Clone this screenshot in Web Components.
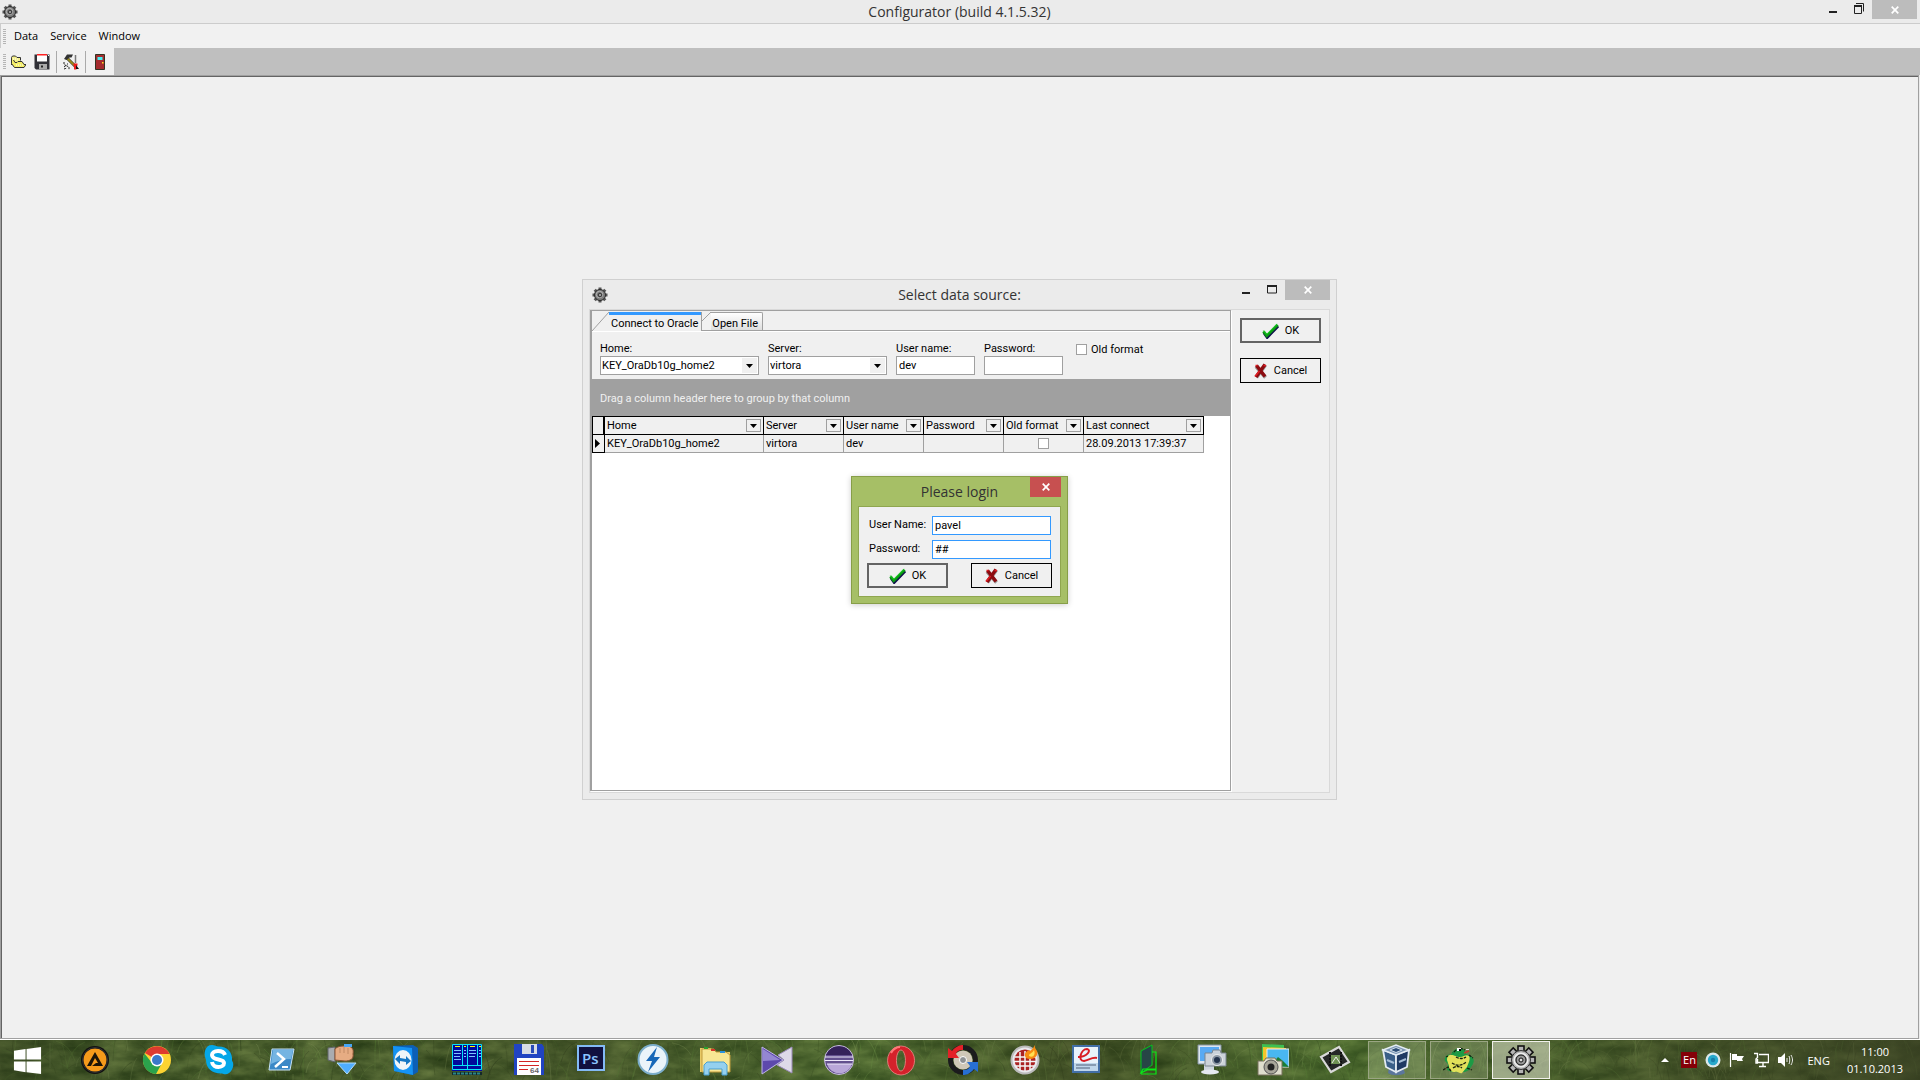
<!DOCTYPE html>
<html lang="en">
<head>
<meta charset="utf-8">
<title>Configurator (build 4.1.5.32)</title>
<style>
html, body { margin: 0; height: 100%; overflow: hidden; background: #f0f0f0; }
body { font: 11px/13px Roboto, "Liberation Sans", Arial, sans-serif; color: #000; --ui: "Open Sans", "Noto Sans", sans-serif; }
</style>
</head>
<body>
<config-desktop></config-desktop>
<script>
const define = (name, html) => customElements.define(name, class extends HTMLElement {
  connectedCallback() {
    if (this.shadowRoot) return;
    const root = this.attachShadow({ mode: 'open' });
    const t = document.createElement('template');
    t.innerHTML = typeof html === 'function' ? html(this) : html;
    root.append(t.content.cloneNode(true));
  }
});

let teeth = '';
for (let i = 0; i < 8; i++) teeth += `<rect x="13" y="2" width="6" height="7" fill="#b5b5b5" stroke="#111" stroke-width="1.6" transform="rotate(${i * 45} 16 16)"/>`;
let small = '';
for (let i = 0; i < 8; i++) small += `<rect x="6.500" y=".5" width="3" height="4" fill="#555" transform="rotate(${i * 45} 8 8)"/>`;

const icons = {
  gear: ['0 0 16 16', `${small}<circle cx="8" cy="8" r="5.500" fill="#7d7d7d" stroke="#2a2a2a"/><circle cx="7.500" cy="7.500" r="3.200" fill="none" stroke="#b5b5b5"/><circle cx="8" cy="8" r="1.800" fill="#999" stroke="#333"/>`],
  gearBig: ['0 0 32 32', `${teeth}<circle cx="16" cy="16" r="9.5" fill="#b5b5b5" stroke="#333" stroke-width="1"/><circle cx="16" cy="16" r="6.8" fill="none" stroke="#eee" stroke-width="1.5"/><circle cx="16" cy="16" r="5" fill="#999" stroke="#111" stroke-width="1"/><circle cx="16" cy="16" r="2" fill="#ddd" stroke="#111"/>`],
  open: ['0 0 16 16', '<path d="M1.500 11V3.500l1-1.500h3l1.500 1.500h3.500v3" fill="#f5f08a" stroke="#333"/><path d="M1.500 4.500v5l3 4h9.500l2-3h-2l-2-3H8L7 8.500H5L3.500 6" fill="#f4ee68" stroke="#333"/><path d="M3 5h6M6 11h7" stroke="#fff" stroke-dasharray="1 1"/>'],
  save: ['0 0 16 16', '<path d="M.5.500h15v15H2l-1.500-1.500z" fill="#303036"/><path d="M3 1h10v6.500H3z" fill="#fff"/><path d="M3 0h10v1.500H3z" fill="#f22"/><path d="M5 10h8v5H5z" fill="#aaa"/><path d="M7 11.500h2v2H7z" fill="#222"/><path d="M14 1h1v1h-1z" fill="#fff"/>'],
  tools: ['0 0 16 16', '<path d="M4 4l9 9" stroke="#333" stroke-width="3"/><path d="M4 4l9 9" stroke="#9a8c1c" stroke-width="2"/><path d="M1 5L4 .5h6L8.500 3.500 6.500 3.500 3.500 6z" fill="#333"/><path d="M12.500 1v8" stroke="#777" stroke-width="1.500"/><path d="M10.500 9.500h4v2l-1 .5v3.500h-2.500V12l-.5-.500z" fill="#ef1c1c"/><path d="M13 11l3 4h-3z" fill="#111"/><path d="M1 8v2.500l2 1 2-2M1 13l2-1.500 3 1.500v2.500M1 15l3-1" fill="none" stroke="#222" stroke-dasharray="2 1"/>'],
  door: ['0 0 16 16', '<path d="M3.500.500h9v15h-9z" fill="#a52c2e" stroke="#332"/><path d="M5.500 3h5v3h-5z" fill="#46f0f5"/><path d="M10 8h1.500v1.500H10z" fill="#ffe020"/>'],
  check: ['0 0 18 16', '<path d="M1.500 9l3.500 5L16.500 2" fill="none" stroke="#10104c" stroke-width="3" transform="translate(.5 .8)"/><path d="M1.500 8.500l3.500 4.500L16.500 1.500" fill="none" stroke="#0a9b12" stroke-width="3"/><path d="M1.500 7.500L5 11.500 16 .8" fill="none" stroke="#1fd52b" stroke-width="1"/>'],
  cross: ['0 0 14 16', '<path d="M2.500 14.500L11.500 2M2 3.500l9.500 11" fill="none" stroke="#999" stroke-width="3.500"/><path d="M2 14L11 1.500M2.500 2.500l8.500 11" fill="none" stroke="#8c0b10" stroke-width="3.500"/><path d="M1 13.500L5.500 8M9.500 2.500h2.500M1.500 2.500h2" stroke="#e01c22" stroke-width="1.500" fill="none"/>'],
  down: ['0 0 7 4', '<path d="M0 0h7L3.500 4z"/>'],
  pointer: ['0 0 5 9', '<path d="M0 0v9l5-4.500z"/>'],
  min: ['0 0 10 11', '<path d="M1 8h8v2H1z" fill="#222"/>'],
  max: ['0 0 10 11', '<path d="M.5 2h9v7h-9z" fill="none" stroke="#222"/><path d="M0 1h10v2H0z" fill="#222"/>'],
  restore: ['0 0 10 11', '<path d="M.5 3.500h7v7h-7z" fill="none" stroke="#222"/><path d="M0 2h8v2H0z" fill="#222"/><path d="M2 .5h7.500v8" fill="none" stroke="#222"/>'],
  close: ['0 0 8 8', '<path d="M.7.700l6.600 6.600M7.300.700L.7 7.300" stroke="#fff" stroke-width="1.700"/>'],
  start: ['0 0 32 32', '<path d="M2 6l12-2v11H2zM15 4l15-2v13H15zM2 17h12v11L2 26zM15 17h15v13l-15-2z" fill="#fff"/>'],
  aimp: ['0 0 32 32', '<circle cx="16" cy="16" r="14" fill="#111"/><circle cx="16" cy="16" r="11.5" fill="#f59a1b"/><circle cx="16" cy="16" r="12.500" fill="none" stroke="#333"/><path d="M16 8l8 14-11 0 4-3h2l-3-5-4 8H8z" fill="#1c1408"/>'],
  chrome: ['0 0 32 32', '<circle cx="16" cy="16" r="14" fill="#fdd332"/><path d="M16 16L3.900 9A14 14 0 0 1 28.500 10H16z" fill="#dd3a2f"/><path d="M3.500 9.500A14 14 0 0 0 15 30l6-11-5-3-5 3z" fill="#2ba24c"/><circle cx="16" cy="16" r="6.500" fill="#fff"/><circle cx="16" cy="16" r="5" fill="#3a79c9"/>'],
  skype: ['0 0 32 32', '<path d="M9 1c3 0 5 2 7 1.500 8 0 14 6 13 14 2 3 1.500 6 0 9-2 4-6 6-10 4C10 30 3 25 3 16 0 9 2 1 9 1z" fill="#05a7e8"/><path d="M22 11c-1-3-4-4-7-4-4 0-6 2-6 4 0 6 12 3 12 8 0 5-11 6-12-1" fill="none" stroke="#fff" stroke-width="4"/>'],
  shell: ['0 0 32 32', '<path d="M7 5h22l-4 21H4z" fill="#3b88c7" stroke="#c7e2f5"/><path d="M8 6h20l-2 9C18 15 12 17 6 20z" fill="#74b4e2"/><path d="M12 9l7 6-9 8" fill="none" stroke="#fff" stroke-width="2.500"/><path d="M17 23h6" stroke="#fff" stroke-width="2"/>'],
  hand: ['0 0 32 32', '<path d="M1 4l7-1v15l-7-2z" fill="#a9acb0" stroke="#60656b"/><path d="M8 5c3-3 7-3 11-3 6 0 8 3 7 8 1 5-3 7-8 7L8 16z" fill="#e6ac83" stroke="#8b5434"/><path d="M13 4v5M17 3v6M21 4v6" stroke="#c08a64"/><path d="M10 19h19l-9 11z" fill="#4fadff" stroke="#b5dcf8"/><path d="M17 0h8v3h-8z" fill="#46a6f4"/>'],
  team: ['0 0 32 32', '<path d="M4 2l20-1 5 3v24l-5 3L5 27z" fill="#0c5fb6"/><path d="M4 2l19 2 1 27L5 27z" fill="#1593f3"/><ellipse cx="14" cy="16" rx="8.500" ry="10" fill="#f0f4f8"/><path d="M6 15l5-4v3l6 1v-3l5 5-5 4v-3l-6-1v3z" fill="#1576c4"/>'],
  far: ['0 0 32 32', '<path d="M1 0h30v27H1z" fill="#000a9c"/><path d="M1 28h30v3H1z" fill="#142a2a"/><path d="M1.500.5h29v25h-29zM16.500 0v26M11.500 1v20M26.500 1v20M2 21.500h28" fill="none" stroke="#0ae3f5"/><path d="M3 6.500h7M3 9.500h7M3 12.500h6M3 15.500h7M18 6.500h7M18 9.500h7M18 12.500h6M13 6.500h2M13 9.500h2M13 12.500h2M28 6.500h2M28 9.500h2M28 12.500h2" stroke="#7fc4ff"/><path d="M4 2.500h5M19 2.500h5M13 2.500h2M28 2.500h2" stroke="#ff0"/><path d="M2 29.500h28" stroke="#2b8586" stroke-width="2" stroke-dasharray="3 1"/>'],
  floppy: ['0 0 32 32', '<path d="M1 0h28l2 3v28H1z" fill="#2144c2"/><path d="M9 0h15v10H9z" fill="#d8dce4"/><path d="M18 1h3v8h-3z" fill="#294bb8"/><path d="M4 14h24v17H4z" fill="#fff"/><path d="M6 17.500h20M6 21.500h20M6 25.500h9" stroke="#d32525"/><text x="17" y="29" font-family="Liberation Sans" font-size="8" font-weight="bold" fill="#666">64</text>'],
  ps: ['0 0 32 32', '<path d="M3 2h26v24H3z" fill="#10103f" stroke="#83baf5" stroke-width="2"/><text x="7" y="20" font-family="Open Sans" font-size="15" font-weight="600" fill="#8bc5ff">Ps</text>'],
  daemon: ['0 0 32 32', '<circle cx="16" cy="15.500" r="14.500" fill="#eaf4fa" stroke="#7caecb" stroke-width="2"/><path d="M20 3L9 17l6 0-4 11 12-15h-6z" fill="#1768b8"/>'],
  explorer: ['0 0 32 32', '<path d="M1 4h11l2 4h17v20H1z" fill="#e8ca66"/><path d="M3 5h12l2 3h10l4 3v17H3z" fill="#f8e694" stroke="#c09b3c"/><path d="M5 3h4v2H5z" fill="#29a02d"/><path d="M12 5h4v2h-4z" fill="#d8342a"/><path d="M21 7h5v2h-5z" fill="#2a92df"/><path d="M5 31V21l3-3h17l3 3v10h-5v-6H10v6z" fill="#94d0ef" stroke="#4a9fcf"/>'],
  kmp: ['0 0 32 32', '<path d="M31 3L17 11l6 5-7 5 15 8z" fill="#ddd9e8" stroke="#9b8bbb"/><path d="M1 3l21 13L1 30z" fill="#5d49ac" stroke="#beb4e6"/><path d="M2 5l17 11L2 17z" fill="#9487d2"/>'],
  eclipse: ['0 0 32 32', '<circle cx="16" cy="16" r="14.500" fill="#63508e" stroke="#cabfe0"/><path d="M3 11A14 14 0 0 1 29 11z" fill="#35225a"/><path d="M4 20h25A13 13 0 0 1 4 20z" fill="#b9a7d9"/><path d="M2 13h28M2 16.500h28M4 20h25" stroke="#eee8fa" stroke-width="1.200"/>'],
  opera: ['0 0 32 32', '<path fill-rule="evenodd" d="M16 2a13.500 14.500 0 1 0 .1 0zM16 6a4.500 10.500 0 1 1-.1 0z" fill="#d5222b" stroke="#f08a8a" stroke-width=".8"/><path d="M6 9C9 4 13 3 15 3" fill="none" stroke="#f77" stroke-width="2"/>'],
  disc: ['0 0 32 32', '<circle cx="16" cy="16" r="12.500" fill="none" stroke="#1b1b1d" stroke-width="5"/><circle cx="16" cy="16" r="9.500" fill="#cfc8b8"/><circle cx="16" cy="16" r="3.500" fill="#8e9294" stroke="#fff"/><path d="M1 14V4l4 3C9 2 13 1 16 1v5c-4 0-6 1-7 4l3 4z" fill="#e32128"/><path d="M31 18v10l-4-3c-4 5-8 6-11 6v-5c4 0 6-1 7-4l-3-4z" fill="#276fd3"/>'],
  burner: ['0 0 32 32', '<circle cx="16" cy="16" r="13.500" fill="#e9e9ee" stroke="#bbb" stroke-width="2"/><circle cx="16" cy="16" r="10.500" fill="#a22"/><path d="M6 13h20M5 17.500h22M7 22h18M11 8v18M16 7v20M21 8v18" stroke="#f4f4f4" stroke-width="1.500"/><path d="M17 14c-3-5 1-6 2-8 2 2 4 0 7-5-1 5 4 5 2 10-2 4-7 5-11 3z" fill="#f68b12"/><path d="M20 12c0-3 3-2 5-6 2 5-1 8-5 6z" fill="#ffe053"/>'],
  sign: ['0 0 32 32', '<path d="M2 2h26v26H2z" fill="#e9f3fb" stroke="#426fa7" stroke-width="2"/><path d="M3 19h24v8H3z" fill="#bfd6ea"/><path d="M7 13C16 13 21 6 16 5 10 5 6 17 13 17c5-1 8-4 13-3" fill="none" stroke="#d81d24" stroke-width="2"/><path d="M5 21h20M5 24h14" stroke="#7688a0" stroke-width="1.500"/>'],
  book: ['0 0 32 32', '<path d="M8 7l11-6v20L8 29z" fill="#274646" stroke="#00c61c"/><path d="M19 8h4v18H14L8 29l2-4h13v5H8" fill="none" stroke="#0bea17" stroke-width="1.200"/>'],
  monitor: ['0 0 32 32', '<path d="M3 1h23v19H3z" fill="#dce6ef" stroke="#8694a2"/><path d="M5 3h19v14H5z" fill="#58aaf3"/><path d="M9 20h10v8H9z" fill="#cdd5de"/><ellipse cx="15" cy="28" rx="9" ry="2.500" fill="#e5e9ef"/><path d="M10 9h7l1-3h7l1 3h5v13H10z" fill="#cbd2da" stroke="#7b858f"/><circle cx="22" cy="16" r="5.500" fill="#8c97a4" stroke="#eee"/><circle cx="22" cy="16" r="3" fill="#23324b"/>'],
  photos: ['0 0 32 32', '<path d="M5 0l22 1v17H5z" fill="#3dbf52"/><path d="M6 3l23 1v17H6z" fill="#f2c628"/><path d="M10 5h22v18H10z" fill="#49b7f1" stroke="#eee"/><path d="M13 22l8-9 5 4 6 6z" fill="#1b7d35"/><path d="M1 17h6l2-3h9l2 3h5v14H1z" fill="#dfdecd" stroke="#77715c"/><circle cx="14" cy="23" r="7" fill="#a8a69a" stroke="#555"/><circle cx="14" cy="23" r="3.500" fill="#222"/>'],
  film: ['0 0 32 32', '<path d="M2 13L20 3l10 15-18 10z" fill="#252727" stroke="#d9d9d9" stroke-width="2.200"/><path d="M12 11h9v9h-9z" fill="#6f9154"/><path d="M11 8v15M22 8v15" stroke="#111" stroke-width="2" stroke-dasharray="2 1"/><path d="M13 19l4-6 4 6" stroke="#eee" fill="none"/>'],
  vbox: ['0 0 32 32', '<path d="M8 24h14l2 5c-4 3-13 3-17 0z" fill="#5b769c"/><path d="M2 6l13 5v17L5 23z" fill="#3a5f88" stroke="#e3ebf2" stroke-width="1.800"/><path d="M15 11l13-5-2 17-11 5z" fill="#1f3a63" stroke="#e3ebf2" stroke-width="1.800"/><path d="M2 6l13-5 13 5-13 5z" fill="#7d98b5" stroke="#e4edf4" stroke-width="1.500"/><path d="M9 6l6-2.500L21 6l-6 2.500z" fill="#2d4f78" stroke="#cfdbe6"/><path d="M6 16l7 3M18 18l7-3" stroke="#a5bdd6" stroke-width="2"/>'],
  toad: ['0 0 32 32', '<path d="M8 11C4 10 1 13 2 17l3 3-1 6 5 2h13l4-2 4-6c2-4 0-8-4-9l-3-1c-1-5-5-7-8-5-4 0-6 3-7 6z" fill="#1d9a45"/><path d="M8 11c4 0 5 2 9 2 4 0 6-3 9-1 2 3-1 8-2 11l-5 6c-2 1-4-2-7-1-4 0-6-2-6-6l-2-6c0-3 1-5 4-5z" fill="#e2e05a"/><path d="M9 19c4 3 10 3 14-1M10 24c3-2 6-2 9 0M13 13c3 2 7 2 10 0M0 26l5-3 3 4M24 24l5 2M3 13l2-1M26 11l4 3M13 6l-3 3M17 4l5 2" fill="none" stroke="#161f10" stroke-width="1.300" stroke-dasharray="3 1"/><path d="M14 4h4v3h-4z" fill="#fff"/><path d="M16 5h2v2h-2z"/><path d="M21 9l5-2" stroke="#c63b2a" stroke-width="1.500"/><path d="M23 5h3v1h-3z" fill="#ddd"/>'],
  up: ['0 0 16 16', '<path d="M4 10h8L8 6z" fill="#fff"/>'],
  teal: ['0 0 16 16', '<circle cx="8" cy="8" r="7.500" fill="#dce9eb"/><circle cx="8" cy="8" r="5.200" fill="#28a9cc"/><circle cx="8" cy="8" r="2.200" fill="#1681ac"/>'],
  flag: ['0 0 16 16', '<path d="M1.500 1v14" stroke="#fff" stroke-width="1.200"/><path d="M3 2h5v2h7l-2 3 1 2H8V8H3z" fill="#fff"/>'],
  network: ['0 0 16 16', '<path d="M6 2.500h9.500v8H4.500V7M10 11v3M6 14.500h7M1 1.500h3.500v4L3 7v4h2" fill="none" stroke="#fff" stroke-width="1.400"/>'],
  speaker: ['0 0 16 16', '<path d="M1 5h3l4-4v14l-4-4H1z" fill="#fff"/><path d="M10 6v4M12 4c1 2 1 6 0 8M14 3c2 4 2 6 0 10" fill="none" stroke="#eee"/>']
};

define('ui-icon', el => {
  const [box, body] = icons[el.getAttribute('name')];
  const w = el.getAttribute('w') || 16, h = el.getAttribute('h') || w;
  return `<style>:host{display:block;flex:none;line-height:0}svg{display:block}</style><svg width="${w}" height="${h}" viewBox="${box}" aria-hidden="true">${body}</svg>`;
});

define('window-controls', el => `<style>
:host{display:flex;align-items:stretch;height:var(--h,20px)}
button{border:0;margin:0;padding:0;background:none;width:26px;display:flex;align-items:flex-end;justify-content:center;padding-bottom:5px}
.close{width:45px;background:#bcbcbc;align-items:center;padding:0}
:host([tone=red]) .close{width:31px;background:#c75050}
</style>
${el.getAttribute('tone') === 'red' ? '' : `<button aria-label="Minimize"><ui-icon name="min" w="10" h="11"></ui-icon></button><button aria-label="Resize"><ui-icon name="${el.getAttribute('mid')}" w="10" h="11"></ui-icon></button>`}
<button class="close" aria-label="Close"><ui-icon name="close" w="8"></ui-icon></button>`);

define('title-bar', `<style>
:host{display:grid;grid-template-columns:1fr auto 1fr;height:var(--bar,23px)}
h1{grid-column:2;margin:0;align-self:center;font:400 14px/20px var(--ui);color:#333;white-space:nowrap}
.icon{align-self:center;padding-left:var(--inset,0)}.end{grid-column:3;display:flex;justify-content:flex-end;align-items:flex-start}
</style><span class="icon"><slot name="icon"></slot></span><h1><slot></slot></h1><div class="end"><slot name="controls"></slot></div>`);

define('menu-bar', `<style>
:host{display:flex;align-items:center;height:24px;background:#f1f1f1;border-left:1px solid #ccc;padding-left:2px}
i{width:3px;height:15px;background:repeating-linear-gradient(#b5b5b5 0 1px,transparent 1px 2px);margin-right:2px}
button{border:0;background:none;font:11px/16px var(--ui);color:#000;padding:0 6px}
</style><i></i><button>Data</button><button>Service</button><button>Window</button>`);

define('tool-bar', `<style>
:host{display:flex;height:27px;background:#bfbfbf}
div{display:flex;align-items:center;background:#f1f1f1;padding:0 2px 0 3px;box-sizing:border-box}
i{width:3px;height:15px;background:repeating-linear-gradient(#b5b5b5 0 1px,transparent 1px 2px)}
button{border:0;background:none;padding:4px;width:24px}
b{width:1px;height:22px;background:#aaa;margin:0 2px}
</style><div><i></i><button aria-label="Open"><ui-icon name="open"></ui-icon></button><button aria-label="Save"><ui-icon name="save"></ui-icon></button><b></b><button aria-label="Tools"><ui-icon name="tools"></ui-icon></button><b></b><button aria-label="Exit"><ui-icon name="door"></ui-icon></button></div>`);

define('action-button', el => `<style>
:host{display:block;width:81px}
button{box-sizing:border-box;width:100%;height:25px;border:1px solid #000;background:#f0f0f0;padding:0;display:flex;align-items:center;justify-content:center;gap:6px;font:inherit;color:#000}
:host([primary]) button{border:2px solid #646464}
</style><button><ui-icon name="${el.getAttribute('icon')}" w="${el.getAttribute('icon') === 'check' ? 17 : 14}" h="16"></ui-icon><slot></slot></button>`);

define('text-field', el => `<style>
:host{display:flex;flex-direction:column;width:var(--w,auto)}
:host([inline]){flex-direction:row;align-items:flex-start}
label{height:15px;line-height:15px;white-space:nowrap}
:host([inline]) label{width:63px;line-height:18px}
input{box-sizing:border-box;min-width:0;width:100%;height:19px;border:1px solid #a0a0a0;background:#fff;padding:0 2px 1px;font:inherit;color:#000;outline:0;border-radius:0}
:host([inline]) input{flex:1;border-color:#3399ff}
</style><label for="f">${el.getAttribute('label')}</label><input id="f" value="${el.getAttribute('value') || ''}">`);

define('combo-field', el => `<style>
:host{display:flex;flex-direction:column;width:var(--w)}
label{height:15px;line-height:15px}
div{display:grid;height:19px;box-sizing:border-box;border:1px solid #a0a0a0;background:#fff}
select,span{grid-area:1/1}
select{appearance:none;border:0;margin:0;padding:0 18px 0 1px;background:none;font:inherit;line-height:17px;color:#000;width:100%}
span{justify-self:end;align-self:center;width:15px;height:15px;margin-right:1px;background:#f0f0f0;display:grid;place-items:center;pointer-events:none}
</style><label for="s">${el.getAttribute('label')}</label><div><select id="s"><option>${el.getAttribute('value')}</option></select><span><ui-icon name="down" w="7" h="4"></ui-icon></span></div>`);

define('tab-strip', `<style>
:host{display:flex;align-items:flex-end;height:19px;border-bottom:1px solid #a0a0a0}
button{font:inherit;line-height:13px;border:0;margin:0;color:#000;display:block;white-space:nowrap;border-right:1px solid #a0a0a0}
svg{display:block;flex:none}
.on{display:flex;height:19px;margin-bottom:-1px;border-right:1px solid #a0a0a0;background:#f0f0f0}
.on button{border:0;border-top:3px solid #3399ff;background:none;padding:0 3px 0 2px}
.off{display:flex;height:18px}
.off button{border-top:1px solid #a0a0a0;border-radius:0 2px 0 0;background:linear-gradient(#fff,#dedede);padding:3px 4px 0 1px}
</style><div class="on" role="tablist"><svg width="17" height="19"><path d="M0 19L17 0" stroke="#a0a0a0" fill="none"/></svg><button role="tab" aria-selected="true">Connect to Oracle</button></div>
<div class="off" role="tablist"><svg width="9" height="18"><path d="M0 9L9 0V18H0z" fill="#f2f2f2"/><path d="M0 9L9 0" stroke="#a0a0a0" fill="none"/></svg><button role="tab">Open File</button></div>`);

const columns = [['Home', 159], ['Server', 80], ['User name', 80], ['Password', 80], ['Old format', 80], ['Last connect', 120]];
define('source-grid', `<style>
:host{display:block;flex:1;background:#fff}
table{border-spacing:0;table-layout:fixed;width:612px;border-left:1px solid #000;border-top:1px solid #000}
th,td{height:17px;padding:0 0 0 2px;border-right:1px solid #000;border-bottom:1px solid #000;background:#f0f0f0;font-weight:400;text-align:left;white-space:nowrap;line-height:15px}
td{border-color:#a0a0a0}
.mark{border-right:2px solid #000;padding:0}td.mark{border-right:1px solid #000;border-bottom-color:#000;padding-left:2px}
th div{display:flex;justify-content:space-between;align-items:center;padding-right:2px}
button{box-sizing:border-box;width:15px;height:13px;border:1px solid #a0a0a0;background:#f0f0f0;padding:0;display:grid;place-items:center}
td.c{padding:0}
input{appearance:none;display:block;margin:0 auto;width:11px;height:11px;box-sizing:border-box;border:1px solid #a0a0a0;background:#fff}
</style><table><colgroup><col style="width:12px">${columns.map(c => `<col style="width:${c[1]}px">`).join('')}</colgroup>
<thead><tr><th class="mark"></th>${columns.map(c => `<th><div>${c[0]}<button aria-label="Filter ${c[0]}"><ui-icon name="down" w="7" h="4"></ui-icon></button></div></th>`).join('')}</tr></thead>
<tbody><tr><td class="mark"><ui-icon name="pointer" w="5" h="9"></ui-icon></td><td>KEY_OraDb10g_home2</td><td>virtora</td><td>dev</td><td></td><td class="c"><input type="checkbox" aria-label="Old format"></td><td>28.09.2013 17:39:37</td></tr></tbody></table>`);

define('source-dialog', `<style>
:host{display:flex;flex-direction:column;box-sizing:border-box;border:1px solid #d0d0d0;background:#ebebeb;padding:0 6px 6px}
title-bar{--bar:29px;--inset:3px}
.client{flex:1;display:flex;border:1px solid #d9d9d9;background:#f0f0f0}
main{flex:1;display:flex;flex-direction:column;border:solid #a0a0a0;border-width:1px 1px 1px 2px;box-shadow:1px 1px #fff;margin:0 1px 1px 0}
.form{display:flex;gap:9px;padding:9px 8px 4px;height:34px;border-top:1px solid #fff}
.old{display:flex;align-items:center;height:16px;gap:4px;margin-left:4px}
.old input{appearance:none;width:11px;height:11px;box-sizing:border-box;border:1px solid #a0a0a0;background:#fff;margin:0}
.group{height:37px;line-height:40px;background:#a0a0a0;color:#f0f0f0;padding-left:8px;margin:0}
aside{padding:8px 8px 0;display:flex;flex-direction:column;gap:15px}
</style><title-bar><ui-icon slot="icon" name="gear" w="16"></ui-icon>Select data source:<window-controls slot="controls" mid="max"></window-controls></title-bar>
<div class="client"><main><tab-strip></tab-strip>
<div class="form"><combo-field label="Home:" value="KEY_OraDb10g_home2" style="--w:159px"></combo-field><combo-field label="Server:" value="virtora" style="--w:119px"></combo-field><text-field label="User name:" value="dev" style="--w:79px"></text-field><text-field label="Password:" style="--w:79px"></text-field><div class="old"><input type="checkbox" id="o"><label for="o">Old format</label></div></div>
<p class="group">Drag a column header here to group by that column</p><source-grid></source-grid></main>
<aside><action-button primary icon="check">OK</action-button><action-button icon="cross">Cancel</action-button></aside></div>`);

define('login-dialog', `<style>
:host{display:flex;flex-direction:column;box-sizing:border-box;border:1px solid #879e48;background:#a6bf66;padding:0 6px 6px;box-shadow:0 1px 6px rgba(0,0,0,.2)}
title-bar{--bar:29px}
.client{border:1px solid #8fa64f;background:#f0f0f0;padding:9px 8px 8px 8px;display:flex;flex-direction:column;gap:5px}
text-field{margin:0 1px 0 2px}
.row{display:flex;justify-content:space-between;margin-top:-1px}
</style><title-bar>Please login<window-controls slot="controls" tone="red"></window-controls></title-bar>
<div class="client"><text-field inline label="User Name:" value="pavel"></text-field><text-field inline label="Password:" value="##"></text-field><div class="row"><action-button primary icon="check">OK</action-button><action-button icon="cross">Cancel</action-button></div></div>`);

const blades = () => {
  let seed = 7, out = '';
  const r = () => (seed = (seed * 16807) % 2147483647) / 2147483647;
  for (let i = 0; i < 620; i++) {
    const x = r() * 1920, y = 10 + r() * 40, dx = (r() - .5) * 44, h = 10 + r() * 26;
    const c = ['#6f8e45', '#86955c', '#2a3518', '#5c8438', '#34421c'][Math.floor(r() * 5)];
    out += `<path d="M${x.toFixed()} ${y.toFixed()}q${(dx / 4).toFixed()} ${(-h * .8).toFixed()} ${dx.toFixed()} ${(-h).toFixed()}" stroke="${c}" stroke-opacity="${(.15 + r() * .35).toFixed(2)}" fill="none"/>`;
  }
  return out;
};
const apps = ['aimp', 'chrome', 'skype', 'shell', 'hand', 'team', 'far', 'floppy', 'ps', 'daemon', 'explorer', 'kmp', 'eclipse', 'opera', 'disc', 'burner', 'sign', 'book', 'monitor', 'photos', 'film', 'vbox', 'toad', 'gearBig'];
define('task-bar', `<style>
:host{display:grid;height:40px;border-top:1px solid #fff;background:#46532a;color:#fff;font:11px/17px var(--ui)}
.bg,nav{grid-area:1/1;min-width:0}
.bg{width:100%;height:40px}
nav{display:flex;align-items:center;height:40px;z-index:1}
button{border:0;background:none;padding:0;display:grid;place-items:center;box-sizing:border-box}
.start{width:54px;margin-right:12px}
.app{width:58px;height:38px;margin-right:4px}
.run{border:1px solid #9aa583;background:rgba(215,225,190,.24)}
.active{border:1px solid #f0f0ea;background:rgba(225,230,210,.55)}
.tray{margin-left:auto;display:flex;align-items:center}
.tray button{width:24px;height:24px;color:#fff;font:inherit}
.en{width:16px;height:16px;background:#850008;line-height:16px;text-align:center}
.lang{margin:0 17px 0 10px}
time{text-align:center;margin-right:17px}
</style><svg class="bg" preserveAspectRatio="none" viewBox="0 0 1920 40" aria-hidden="true"><defs>
<filter id="n" x="0" y="0" width="1" height="1" color-interpolation-filters="sRGB"><feTurbulence type="fractalNoise" baseFrequency=".03 .07" numOctaves="4" seed="4"/><feColorMatrix values=".45 0 0 0 .06 .45 0 0 0 .13 .3 0 0 0 .02 0 0 0 0 1"/></filter>
<linearGradient id="g"><stop offset="0" stop-color="#2e3d1c" stop-opacity=".5"/><stop offset=".12" stop-color="#41602a" stop-opacity=".2"/><stop offset=".3" stop-color="#3c4c24" stop-opacity=".4"/><stop offset=".45" stop-color="#578038" stop-opacity=".35"/><stop offset=".56" stop-color="#3a4420" stop-opacity=".5"/><stop offset=".7" stop-color="#4d7b30" stop-opacity=".4"/><stop offset=".88" stop-color="#3d4824" stop-opacity=".5"/><stop offset="1" stop-color="#3b4224" stop-opacity=".8"/></linearGradient></defs>
<rect width="1920" height="40" filter="url(#n)"/>${blades()}<rect width="1920" height="40" fill="url(#g)"/></svg>
<nav><button class="start" aria-label="Start"><ui-icon name="start" w="31"></ui-icon></button>${apps.map((a, i) => `<button class="app ${i === 23 ? 'active' : i > 20 ? 'run' : ''}" aria-label="${a}"><ui-icon name="${a}" w="32"></ui-icon></button>`).join('')}
<div class="tray"><button aria-label="Show hidden icons"><ui-icon name="up"></ui-icon></button><button><span class="en">En</span></button>${['teal', 'flag', 'network', 'speaker'].map(n => `<button aria-label="${n}"><ui-icon name="${n}"></ui-icon></button>`).join('')}<span class="lang">ENG</span><time>11:00<br>01.10.2013</time></div></nav>`);

define('config-desktop', `<style>
:host{display:flex;flex-direction:column;height:100vh;position:relative;background:#ebebeb}
.main{padding:0 3px 0 2px;border-bottom:1px solid #ccc;--h:19px}
.work{flex:1;background:#f0f0f0;border:solid #646464;border-width:1px 0 0 1px;outline:1px solid #a0a0a0;outline-offset:0;margin:1px 2px 1px 1px;box-sizing:border-box}
source-dialog,login-dialog{position:absolute}
source-dialog{left:582px;top:279px;width:755px;height:521px}
login-dialog{left:851px;top:476px;width:217px}
task-bar{position:relative}
</style><title-bar class="main"><ui-icon slot="icon" name="gear" w="16"></ui-icon>Configurator (build 4.1.5.32)<window-controls slot="controls" mid="restore"></window-controls></title-bar>
<menu-bar></menu-bar><tool-bar></tool-bar><div class="work"></div><task-bar></task-bar><source-dialog></source-dialog><login-dialog></login-dialog>`);
</script>
</body>
</html>
